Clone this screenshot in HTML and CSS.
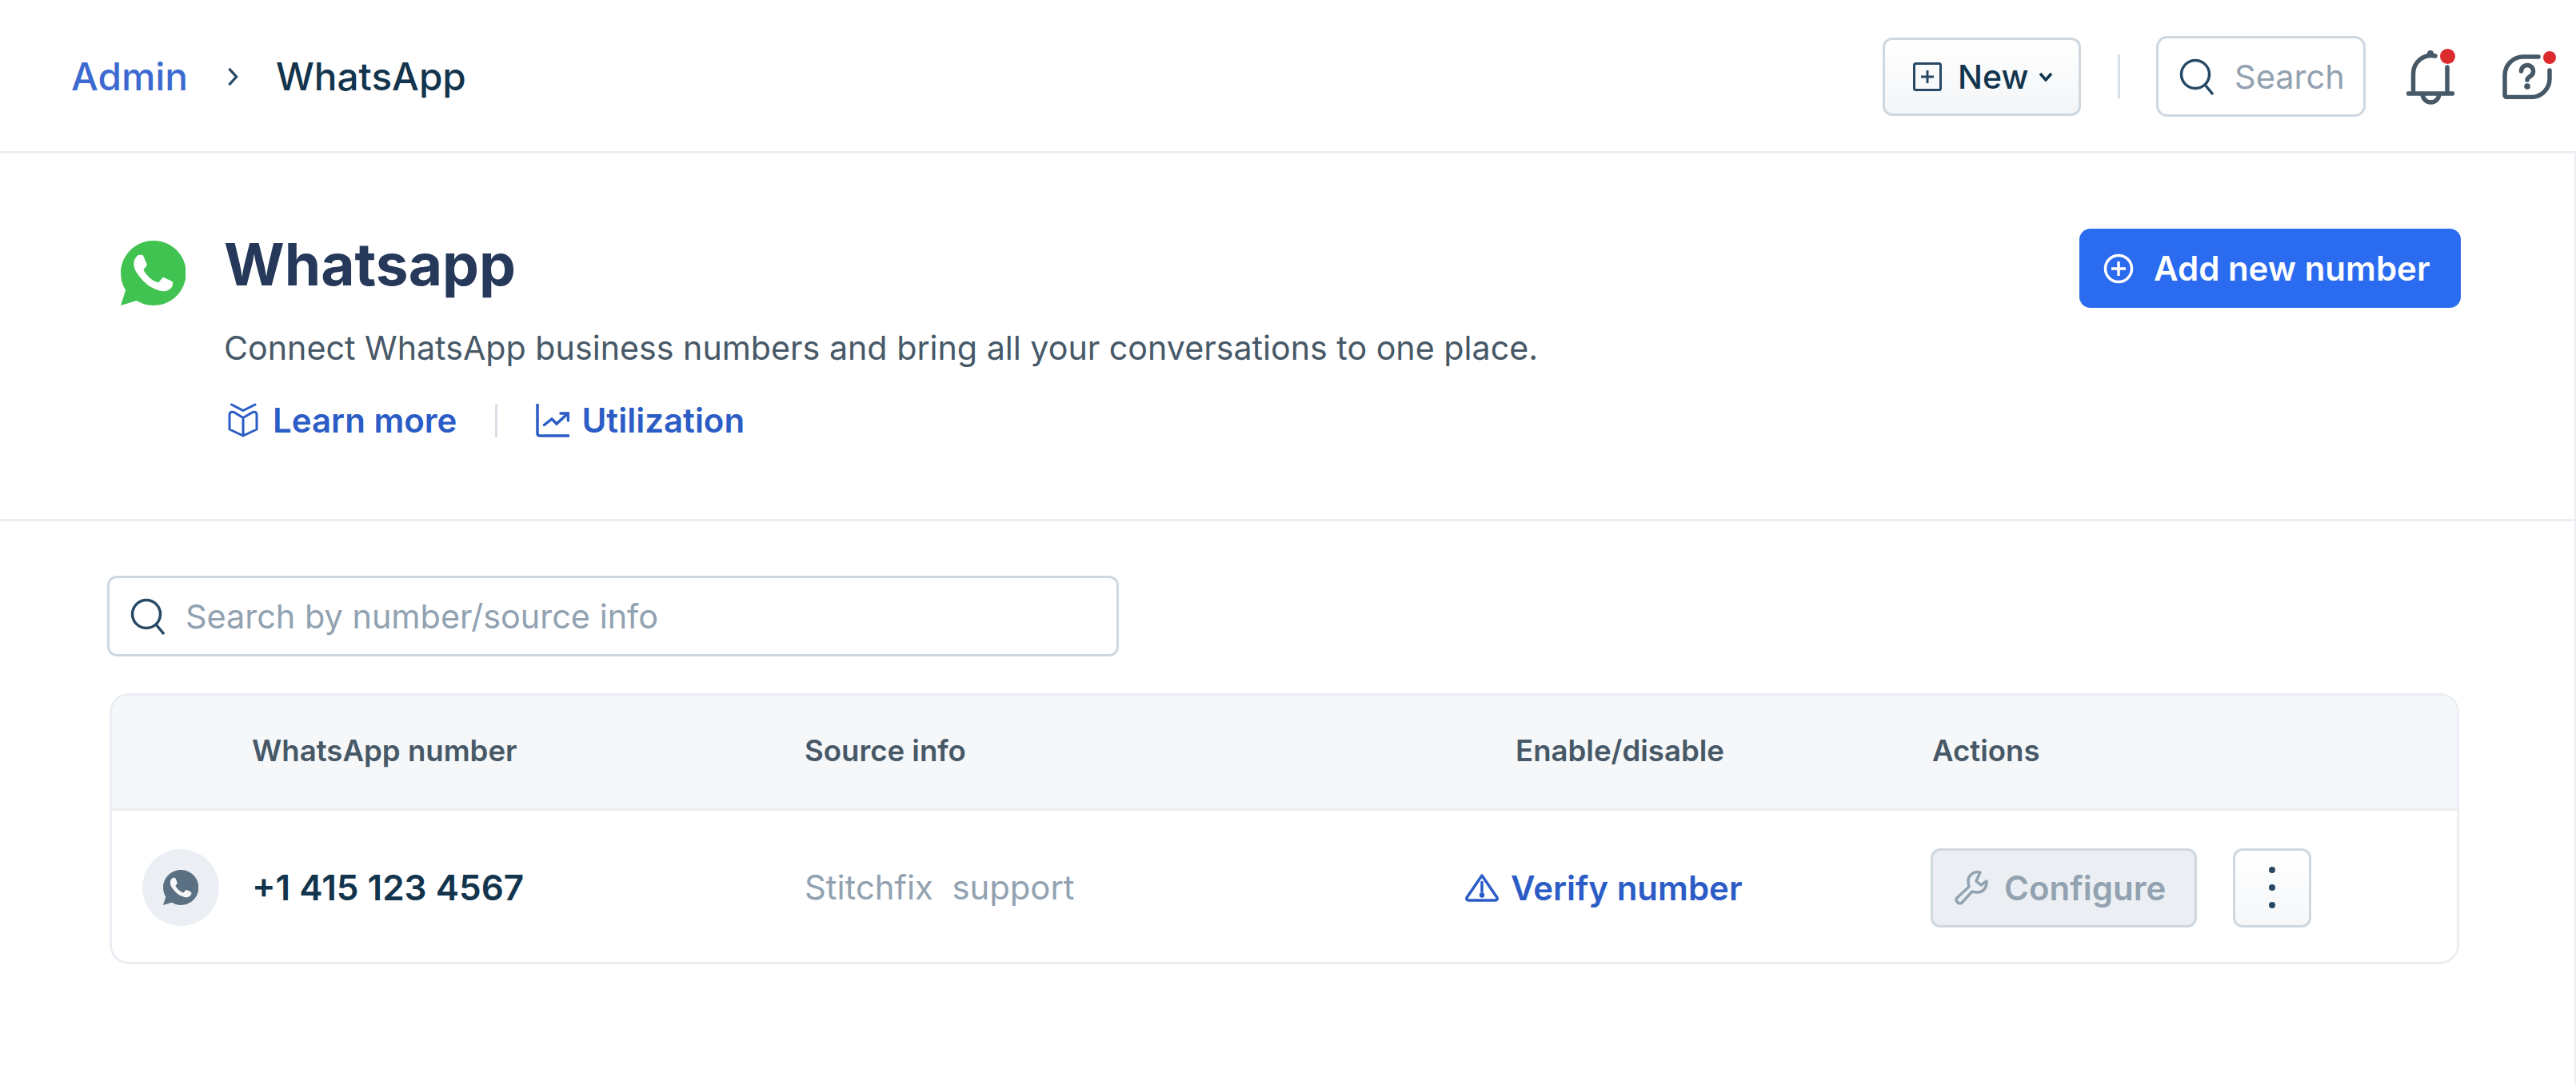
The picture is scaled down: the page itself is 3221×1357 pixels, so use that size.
FILE: index.html
```html
<!DOCTYPE html>
<html lang="en">
<head>
  <meta charset="UTF-8">
  <title>WhatsApp</title>
  <link rel="stylesheet" href="styles.css">
</head>
<body>
  <header class="topbar">
    <nav class="crumbs">
      <a class="crumb-link">Admin</a>
      <svg class="crumb-sep" viewBox="0 0 16 26"><path d="M3 2l10 11L3 24"/></svg>
      <span class="crumb-current">WhatsApp</span>
    </nav>
    <div class="top-actions">
      <button class="btn-new">
        <svg class="icon-plus-box" viewBox="0 0 36 36"><rect x="1.500" y="1.500" width="33" height="33" rx="2"/><path d="M18 10v16M10 18h16"/></svg>
        <span>New</span>
        <svg class="icon-caret" viewBox="0 0 18 12"><path d="M2 2l7 8 7-8"/></svg>
      </button>
      <span class="top-divider"></span>
      <div class="top-search">
        <svg class="icon-search" viewBox="0 0 44 46"><circle cx="20" cy="20" r="17.500"/><path d="M32 33l10 12"/></svg>
        <span>Search</span>
      </div>
      <div class="icon-bell">
        <svg viewBox="0 0 60 70"><path d="M2.500 56h55M8.500 56V31A22.500 22.500 0 0 1 36 9M51 23v33M20 56a10.500 11 0 0 0 21 0"/><circle class="solid" cx="30" cy="6" r="4"/></svg>
        <span class="dot"></span>
      </div>
      <div class="icon-help">
        <svg viewBox="0 0 62 56"><path d="M45 3H26A23 23 0 0 0 3 26v25c0 1.500 1 2.500 2.500 2.500H36A23 23 0 0 0 59 30v-10M23.500 21a7.500 7.500 0 1 1 12 6c-2 1.500-4.500 2.500-4.500 5"/><circle class="solid" cx="31" cy="40" r="3.800"/></svg>
        <span class="dot dot-small"></span>
      </div>
    </div>
  </header>

  <div class="page-body">
    <section class="hero">
      <svg class="wa-logo" viewBox="2 2 20 20"><path fill="#40c351" d="M12.050 2C6.500 2 2 6.500 2 12c0 1.900.5 3.700 1.500 5.300L2 22l4.900-1.500A10 10 0 1 0 12.050 2z"/><path fill="#fff" d="M17.472 14.382c-.297-.149-1.758-.867-2.030-.967-.273-.099-.471-.148-.67.15-.197.297-.767.966-.94 1.164-.173.199-.347.223-.644.075-.297-.15-1.255-.463-2.390-1.475-.883-.788-1.480-1.761-1.653-2.059-.173-.297-.018-.458.130-.606.134-.133.298-.347.446-.52.149-.174.198-.298.298-.497.099-.198.050-.371-.025-.52-.075-.149-.669-1.612-.916-2.207-.242-.579-.487-.5-.669-.51-.173-.008-.371-.010-.57-.010-.198 0-.52.074-.792.372-.272.297-1.040 1.016-1.040 2.479 0 1.462 1.065 2.875 1.213 3.074.149.198 2.096 3.200 5.077 4.487.709.306 1.262.489 1.694.625.712.227 1.360.195 1.871.118.571-.085 1.758-.719 2.006-1.413.248-.694.248-1.289.173-1.413-.074-.124-.272-.198-.57-.347z"/></svg>
      <div class="hero-text">
        <h1>Whatsapp</h1>
        <p>Connect WhatsApp business numbers and bring all your conversations to one place.</p>
        <div class="hero-links">
          <a class="link">
            <svg class="icon-book" viewBox="0 0 38 44"><path d="M4.500 2L19 9.500 34 2M19 18.500L7.500 11.500Q2 10 2 15v18l17 8 17-8V15q0-5-5-3.500zM19 18.500V41"/></svg>
            Learn more
          </a>
          <span class="link-divider"></span>
          <a class="link">
            <svg class="icon-chart" viewBox="0 0 42 42"><path d="M2 1v36c0 2 1 3 3 3h36M10.500 26.500l9.500-7.500 6 6 14-13M31 12h9.500v9"/></svg>
            Utilization
          </a>
        </div>
      </div>
      <button class="btn-add">
        <svg viewBox="0 0 38 38"><circle cx="19" cy="19" r="16.500"/><path d="M19 10v18M10 19h18"/></svg>
        Add new number
      </button>
    </section>

    <main class="content">
      <div class="search-box">
        <svg class="icon-search" viewBox="0 0 44 46"><circle cx="20" cy="20" r="17.500"/><path d="M32 33l10 12"/></svg>
        <span>Search by number/source info</span>
      </div>

      <div class="numbers">
        <div class="row row-head">
          <span></span>
          <span>WhatsApp number</span>
          <span>Source info</span>
          <span>Enable/disable</span>
          <span>Actions</span>
        </div>
        <div class="row row-body">
          <span class="avatar">
            <svg viewBox="2 2 20 20"><path fill="#5b7083" d="M12.050 2C6.500 2 2 6.500 2 12c0 1.900.5 3.700 1.500 5.300L2 22l4.900-1.500A10 10 0 1 0 12.050 2z"/><path fill="#f5f7f9" d="M17.472 14.382c-.297-.149-1.758-.867-2.030-.967-.273-.099-.471-.148-.67.15-.197.297-.767.966-.94 1.164-.173.199-.347.223-.644.075-.297-.15-1.255-.463-2.390-1.475-.883-.788-1.480-1.761-1.653-2.059-.173-.297-.018-.458.130-.606.134-.133.298-.347.446-.52.149-.174.198-.298.298-.497.099-.198.050-.371-.025-.52-.075-.149-.669-1.612-.916-2.207-.242-.579-.487-.5-.669-.51-.173-.008-.371-.010-.57-.010-.198 0-.52.074-.792.372-.272.297-1.040 1.016-1.040 2.479 0 1.462 1.065 2.875 1.213 3.074.149.198 2.096 3.200 5.077 4.487.709.306 1.262.489 1.694.625.712.227 1.360.195 1.871.118.571-.085 1.758-.719 2.006-1.413.248-.694.248-1.289.173-1.413-.074-.124-.272-.198-.57-.347z"/></svg>
          </span>
          <span class="phone">+1 415 123 4567</span>
          <span class="source">Stitchfix&nbsp; support</span>
          <a class="link verify">
            <svg viewBox="0 0 42 36"><path d="M21 3L2.500 30c-1.500 2.500-.5 4 2 4h33c2.500 0 3.500-1.500 2-4zM21 11.500V23"/><circle cx="21" cy="27.500" r="1.500"/></svg>
            Verify number
          </a>
          <div class="actions">
            <button class="btn-configure">
              <svg viewBox="0 0 42 43"><path d="M32 2C24 0 17 6 17 13c0 3 .5 5 1 7L3 34c-3 3 2 9 6 6l13-14c3 1 5 1 7 1 7 0 12-7 11-14l-7 5-6-5z"/></svg>
              Configure
            </button>
            <button class="btn-more"><i></i><i></i><i></i></button>
          </div>
        </div>
      </div>
    </main>
  </div>
</body>
</html>
```
FILE: styles.css
```css
* {
  box-sizing: border-box;
}

body {
  margin: 0;
  background: #fff;
  font-family: Inter, "Noto Sans", sans-serif;
  color: #12344d;
}

svg {
  fill: none;
  stroke: currentColor;
  flex: none;
  display: block;
}

button {
  font-family: inherit;
  cursor: pointer;
}

/* top bar */
.topbar {
  height: 192px;
  border-bottom: 3px solid #ebeff3;
  padding: 2px 30px 0 89px;
  display: flex;
  align-items: center;
  justify-content: space-between;
}

.crumbs {
  display: flex;
  align-items: center;
  font-size: 47.700px;
  font-weight: 500;
}

.crumb-link {
  color: #3d6ad0;
}

.crumb-sep {
  width: 16px;
  height: 24px;
  margin: 0 46px 0 48px;
  stroke: #264966;
  stroke-width: 3.500;
}

.top-actions {
  display: flex;
  align-items: center;
}

.btn-new {
  width: 248px;
  height: 98px;
  padding: 0 0 0 35px;
  display: flex;
  align-items: center;
  font-size: 41px;
  font-weight: 500;
  color: #12344d;
  background: linear-gradient(#fff, #f3f5f7);
  border: 3px solid #cfd7df;
  border-radius: 12px;
}

.icon-plus-box {
  width: 36px;
  height: 36px;
  margin-right: 20px;
  stroke: #264966;
  stroke-width: 3;
}

.icon-caret {
  width: 18px;
  height: 12px;
  margin-left: 13px;
  stroke-width: 3.500;
}

.top-divider {
  width: 3px;
  height: 55px;
  margin: 0 45px 0 46px;
  background: #d8dfe6;
}

.top-search {
  width: 262px;
  height: 101px;
  padding-left: 26px;
  display: flex;
  align-items: center;
  gap: 25px;
  font-size: 41.500px;
  color: #92a2b1;
  border: 3px solid #cfd7df;
  border-radius: 14px;
}

.icon-search {
  width: 44px;
  height: 46px;
  stroke: #264966;
  stroke-width: 3.500;
}

.icon-bell,
.icon-help {
  position: relative;
  color: #475867;
}

.icon-bell {
  width: 60px;
  height: 70px;
  margin-left: 51px;
}

.icon-help {
  width: 62px;
  height: 56px;
  margin-left: 60px;
}

.icon-bell svg,
.icon-help svg {
  width: 100%;
  height: 100%;
  stroke-width: 5.500;
  stroke-linecap: round;
}

.solid {
  fill: currentColor;
  stroke: none;
}

.dot {
  position: absolute;
  top: 0;
  right: -1px;
  width: 19px;
  height: 19px;
  border-radius: 50%;
  background: #dc2b2f;
}

.dot-small {
  top: -4px;
  right: -5px;
  width: 16px;
  height: 16px;
}

.page-body {
  min-height: 1165px;
  border-right: 2px solid #ebeff3;
}

/* hero */
.hero {
  height: 460px;
  padding: 99px 142px 0 151px;
  border-bottom: 3px solid #ebeff3;
  display: flex;
  align-items: flex-start;
}

.wa-logo {
  width: 81px;
  height: 81px;
  margin-top: 10px;
  stroke: none;
}

.hero-text {
  margin-left: 48px;
  flex: 1;
}

.hero h1 {
  margin: 0;
  font-size: 73px;
  font-weight: 700;
  line-height: 80px;
  color: #26395a;
}

.hero p {
  margin: 36px 0 0;
  font-size: 41.200px;
  line-height: 56px;
  color: #475867;
}

.hero-links {
  margin-top: 37px;
  display: flex;
  align-items: center;
}

.link {
  display: flex;
  align-items: center;
  font-size: 42px;
  font-weight: 600;
  color: #2c5cc5;
}

.icon-book {
  width: 38px;
  height: 44px;
  margin: 0 18px 0 5px;
  stroke-width: 3;
  stroke-linejoin: round;
  stroke-linecap: round;
}

.icon-chart {
  width: 42px;
  height: 42px;
  margin-right: 15px;
  stroke-width: 3.500;
  stroke-linecap: round;
}

.link-divider {
  width: 3px;
  height: 42px;
  margin: 0 48px;
  background: #d8dfe6;
}

.btn-add {
  width: 477px;
  height: 99px;
  margin-top: -5px;
  padding: 0 0 0 30px;
  display: flex;
  align-items: center;
  gap: 25px;
  font-size: 42px;
  font-weight: 600;
  color: #fff;
  background: #2a6bf0;
  border: 0;
  border-radius: 14px;
}

.btn-add svg {
  width: 38px;
  height: 38px;
  stroke-width: 3.500;
}

/* numbers table */
.content {
  padding: 68px 144px 0 134px;
}

.search-box {
  width: 1265px;
  height: 101px;
  padding-left: 26px;
  display: flex;
  align-items: center;
  gap: 25px;
  font-size: 41.400px;
  color: #92a2b1;
  border: 3px solid #cfd7df;
  border-radius: 12px;
}

.numbers {
  margin: 46px 0 0 3px;
  border: 3px solid #ebeff3;
  border-radius: 24px;
  overflow: hidden;
}

.row {
  display: grid;
  grid-template-columns: 175px 691px 889px 521px 1fr;
  align-items: center;
}

.row-head {
  height: 144px;
  padding-bottom: 3px;
  font-size: 36.600px;
  font-weight: 600;
  color: #475867;
  background: #f5f7f9;
  border-bottom: 3px solid #ebeff3;
}

.row-body {
  height: 189px;
  padding-top: 3px;
  font-size: 42px;
}

.avatar {
  width: 96px;
  height: 96px;
  margin-left: 38px;
  display: flex;
  align-items: center;
  justify-content: center;
  border-radius: 50%;
  background: #ebeff3;
}

.avatar svg {
  width: 44px;
  height: 44px;
  stroke: none;
}

.phone {
  font-size: 44px;
  font-weight: 600;
  color: #12344d;
}

.source {
  font-size: 41.800px;
  color: #92a2b1;
}

.verify {
  margin-left: -63px;
}

.verify svg {
  width: 42px;
  height: 36px;
  margin-right: 15px;
  stroke-width: 3.500;
  stroke-linejoin: round;
  stroke-linecap: round;
}

.verify circle {
  fill: currentColor;
}

.actions {
  margin-left: -2px;
  display: flex;
  gap: 45px;
}

.btn-configure {
  width: 333px;
  height: 99px;
  padding: 0 0 0 27px;
  display: flex;
  align-items: center;
  gap: 20px;
  font-size: 42px;
  font-weight: 600;
  color: #92a2b1;
  background: #ebeff3;
  border: 3px solid #cfd7df;
  border-radius: 12px;
}

.btn-configure svg {
  width: 42px;
  height: 43px;
  stroke-width: 3.500;
  stroke-linejoin: round;
}

.btn-more {
  width: 98px;
  height: 99px;
  padding: 0;
  display: flex;
  flex-direction: column;
  align-items: center;
  justify-content: center;
  gap: 14px;
  background: linear-gradient(#fff, #f5f7f9);
  border: 3px solid #cfd7df;
  border-radius: 12px;
}

.btn-more i {
  width: 8px;
  height: 8px;
  border-radius: 50%;
  background: #264966;
}
```
